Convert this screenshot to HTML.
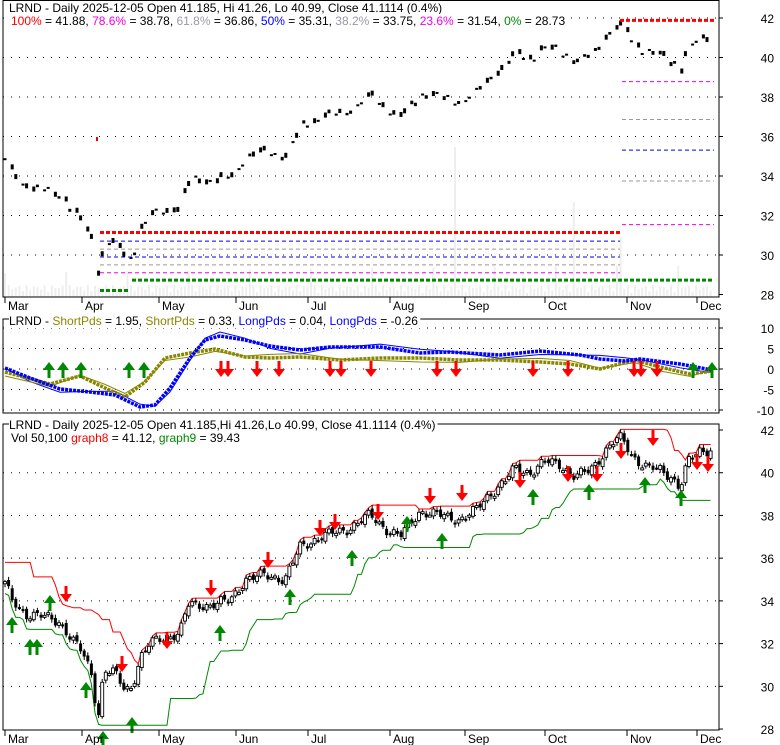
<!DOCTYPE html>
<html><head><meta charset="utf-8"><style>
body{margin:0;background:#fff;}
svg{display:block;font-family:"Liberation Sans",sans-serif;font-size:12px;}
</style></head><body>
<svg id="s" width="780" height="745" xmlns="http://www.w3.org/2000/svg">
<rect width="780" height="745" fill="#fff"/>
<g id="g"></g>
</svg>
<script>
var NS="http://www.w3.org/2000/svg",G=document.getElementById('g');
function el(t,a,txt){var e=document.createElementNS(NS,t);for(var k in a)e.setAttribute(k,a[k]);if(txt!==undefined)e.textContent=txt;G.appendChild(e);return e;}
function interp(pts,x){for(var i=0;i<pts.length-1;i++){if(x<=pts[i+1][0]){var a=pts[i],b=pts[i+1];return a[1]+(b[1]-a[1])*(x-a[0])/(b[0]-a[0]);}}return pts[pts.length-1][1];}
var L=3,R=719;
function y1(p){return 18+(42-p)*19.75;}
function y2(v){return 369-v*4.1;}
function y3(p){return 430+(42-p)*21.36;}
function hdots(y){el('line',{x1:L,x2:R,y1:y,y2:y,stroke:'#000','stroke-width':1,'stroke-dasharray':'1,7'});}
[42,40,38,36,34,32,30].forEach(function(p){hdots(y1(p));});
[10,5,0,-5,-10].forEach(function(v){hdots(y2(v));});
[40,38,36,34,32,30].forEach(function(p){hdots(y3(p));});
var key=[[5,34.8],[12,34.0],[25,33.4],[40,33.3],[60,33.0],[72,32.2],[82,31.6],[92,30.5],[98,28.5],[104,30.8],[115,30.6],[125,29.8],[132,30.0],[140,31.3],[150,32.0],[165,32.3],[180,32.5],[188,33.8],[210,33.8],[230,34.0],[245,35.0],[265,35.2],[285,35.0],[300,36.5],[320,37.0],[345,37.3],[370,38.0],[385,37.4],[400,37.0],[420,38.2],[440,38.0],[460,37.8],[475,38.2],[490,39.0],[505,39.6],[515,40.2],[530,40.0],[545,40.5],[560,40.4],[575,39.8],[590,40.1],[605,41.0],[615,41.5],[622,41.6],[632,40.8],[645,40.3],[660,40.1],[672,39.8],[680,39.3],[688,40.5],[700,41.0],[712,41.11]];
var xs=[],cl=[],op=[],hi=[],lo=[];
var prev=34.8;
for(var x=5,i=0;x<=712;x+=3.6,i++){
 var c=interp(key,x)+0.18*Math.sin(i*1.7)+0.12*Math.sin(i*0.63+1);
 var o=prev+0.1*Math.sin(i*2.3);
 xs.push(x);cl.push(c);op.push(o);hi.push(Math.max(o,c)+0.08+0.08*Math.abs(Math.sin(i)));lo.push(Math.min(o,c)-0.08-0.08*Math.abs(Math.cos(i)));prev=c;}
for(var i=0;i<xs.length;i++){var h=4+8*Math.abs(Math.sin(i*1.3))+(i%17==0?20:0);if(Math.abs(xs[i]-455)<2)h=150;if(Math.abs(xs[i]-573)<2)h=95;if(Math.abs(xs[i]-620)<2)h=60;
 el('rect',{x:xs[i]-1,y:297-h,width:2,height:h,fill:'#eeeeee'});}
for(var i=0;i<xs.length;i++){if(i%3==1)continue;var yo=y1(op[i]),yc=y1(cl[i]);var t=Math.min(yo,yc),hh=Math.min(5,Math.max(2,Math.abs(yo-yc)));
 el('rect',{x:xs[i]-1.5,y:t,width:3,height:hh,fill:'#000'});}
el('rect',{x:96,y:137,width:2,height:4,fill:'#e00'});
function hl(x1,x2,y,col,w,d){el('line',{x1:x1,x2:x2,y1:y,y2:y,stroke:col,'stroke-width':w,'stroke-dasharray':d});}
hl(620,714,y1(41.88),'#f00',3,'4,2');
hl(622,714,y1(38.78),'#e0e','1','4,3');hl(622,714,y1(36.86),'#999','1','4,3');hl(622,714,y1(35.31),'#00e','1','4,3');hl(622,714,y1(33.75),'#999','1','4,3');hl(622,714,y1(31.54),'#e0e','1','4,3');
hl(100,620,y1(31.14),'#f00',3,'4,2');
hl(100,620,y1(30.7),'#00e','1','4,3');hl(100,620,y1(30.3),'#999','1','4,3');hl(100,620,y1(29.9),'#00e','1','4,3');hl(100,620,y1(29.5),'#999','1','4,3');hl(100,620,y1(29.1),'#e0e','1','4,3');
hl(100,128,y1(28.2),'#080',3,'4,2');hl(132,714,y1(28.73),'#080',3,'4,2');
function poly(pts,col,w,d){el('polyline',{points:pts.map(function(p){return p[0]+','+p[1];}).join(' '),fill:'none',stroke:col,'stroke-width':w,'stroke-dasharray':d||''});}
var bt=[[5,368],[30,378],[60,389],[90,392],[115,395],[140,407],[155,405],[170,388],[190,358],[205,340],[220,336],[245,340],[270,346],[300,350],[330,347],[380,347],[420,353],[450,352],[500,355],[540,351],[580,355],[600,359],[625,361],[640,359],[680,364],[712,370]];
var ot=[[5,372],[50,384],[80,376],[105,388],[125,397],[145,382],[165,358],[190,353],[215,349],[245,357],[270,358],[300,357],[340,360],[380,358],[420,358],[460,360],[500,360],[540,362],[570,364],[600,369],[635,360],[660,367],[690,374],[712,371]];
poly(bt.map(function(p,i){return [p[0],p[1]+4*Math.sin(i*1.1)];}),'#00f',1);
poly(ot.map(function(p,i){return [p[0],p[1]+4*Math.cos(i*0.9)];}),'#880',1);
poly(ot,'#880',3.5,'3,1');
poly(bt,'#00f',3.5,'3,1');
var rp=[],gp=[];
for(var i=0;i<xs.length;i++){var mx=-1,mn=99;for(var j=Math.max(0,i-12);j<=i;j++){mx=Math.max(mx,hi[j]);}for(var j=Math.max(0,i-18);j<=i;j++){mn=Math.min(mn,lo[j]);}
 if(i<8)mx=35.8;rp.push([xs[i],y3(mx)]);gp.push([xs[i],y3(mn-0.3)]);}
poly(rp,'#f00',1);poly(gp,'#080',1);
for(var i=0;i<xs.length;i++){var yo=y3(op[i]),yc=y3(cl[i]);var t=Math.min(yo,yc),hh=Math.max(2,Math.abs(yo-yc));var isDn=cl[i]<op[i];
 el('line',{x1:xs[i],x2:xs[i],y1:y3(hi[i]),y2:y3(lo[i]),stroke:'#000','stroke-width':1});
 el('rect',{x:xs[i]-1.5,y:t,width:3,height:hh,fill:isDn?'#000':'#fff',stroke:'#000','stroke-width':isDn?0:0.9});}
function dnA(x,y){el('polygon',{points:(x-1.5)+','+(y-8)+' '+(x+1.5)+','+(y-8)+' '+(x+1.5)+','+y+' '+(x+6)+','+y+' '+x+','+(y+8)+' '+(x-6)+','+y+' '+(x-1.5)+','+y,fill:'#f00'});}
function upA(x,y){el('polygon',{points:(x-1.5)+','+(y+8)+' '+(x+1.5)+','+(y+8)+' '+(x+1.5)+','+y+' '+(x+6)+','+y+' '+x+','+(y-8)+' '+(x-6)+','+y+' '+(x-1.5)+','+y,fill:'#080'});}
[49,63,81,129,144].forEach(function(x){upA(x,370);});
[693,712].forEach(function(x){upA(x,370);});
[221,228,257,279,330,341,371,437,456,533,568,634,641,657].forEach(function(x){dnA(x,369);});
[[66,594],[122,664],[167,641],[211,588],[268,560],[320,528],[335,522],[378,512],[430,496],[462,493],[520,480],[568,474],[597,474],[621,451],[653,438],[697,462],[708,464]].forEach(function(p){dnA(p[0],p[1]);});
[[12,625],[30,647],[37,647],[50,603],[86,690],[103,739],[132,725],[220,633],[290,597],[352,558],[407,524],[442,541],[533,497],[589,492],[645,485],[681,498]].forEach(function(p){upA(p[0],p[1]);});
function frame(t,b){el('rect',{x:L,y:t,width:R-L,height:b-t,fill:'none',stroke:'#000','stroke-width':1});}
el('rect',{x:0,y:0,width:3,height:745,fill:'#fff'});
frame(0.5,297);frame(319,413);frame(424,730);
function rl(y,t){el('line',{x1:R,x2:R+4,y1:y,y2:y,stroke:'#000'});el('text',{x:774,y:y+5,'text-anchor':'end'},t);}
[42,40,38,36,34,32,30,28].forEach(function(p){rl(y1(p),''+p);});
[[10,'10'],[5,'5'],[0,'0'],[-5,'-5'],[-10,'-10']].forEach(function(p){rl(y2(p[0]),p[1]);});
[42,40,38,36,34,32,30,28].forEach(function(p){rl(y3(p),''+p);});
var mo=[['Mar',5],['Apr',82],['May',159],['Jun',236],['Jul',308],['Aug',390],['Sep',465],['Oct',545],['Nov',627],['Dec',697]];
[297,730].forEach(function(b){mo.forEach(function(m){el('line',{x1:m[1],x2:m[1],y1:b,y2:b+6,stroke:'#000'});el('text',{x:m[1]+3,y:b+13},m[0]);});});
function tt(x,y,parts){var bg=el('rect',{x:x,y:y-11,width:0,height:14,fill:'#fff'});var t=el('text',{x:x,y:y});parts.forEach(function(p){var s=document.createElementNS(NS,'tspan');s.setAttribute('fill',p[1]);s.textContent=p[0];t.appendChild(s);});
 try{var b=t.getBBox();bg.setAttribute('width',b.width+2);}catch(e){}}
tt(9,12,[['LRND - Daily 2025-12-05 Open 41.185, Hi 41.26, Lo 40.99, Close 41.1114 (0.4%)','#000']]);
tt(11,25,[['100%','#f00'],[' = 41.88, ','#000'],['78.6%','#e0e'],[' = 38.78, ','#000'],['61.8%','#99a'],[' = 36.86, ','#000'],['50%','#00f'],[' = 35.31, ','#000'],['38.2%','#99a'],[' = 33.75, ','#000'],['23.6%','#e0e'],[' = 31.54, ','#000'],['0%','#080'],[' = 28.73','#000']]);
tt(9,325,[['LRND - ','#000'],['ShortPds','#880'],[' = 1.95, ','#000'],['ShortPds','#880'],[' = 0.33, ','#000'],['LongPds','#00f'],[' = 0.04, ','#000'],['LongPds','#00f'],[' = -0.26','#000']]);
tt(9,429,[['LRND - Daily 2025-12-05 Open 41.185,Hi 41.26,Lo 40.99, Close 41.1114 (0.4%)','#000']]);
tt(11,442,[['Vol 50,100 ','#000'],['graph8','#f00'],[' = 41.12, ','#000'],['graph9','#080'],[' = 39.43','#000']]);
</script>
</body></html>
